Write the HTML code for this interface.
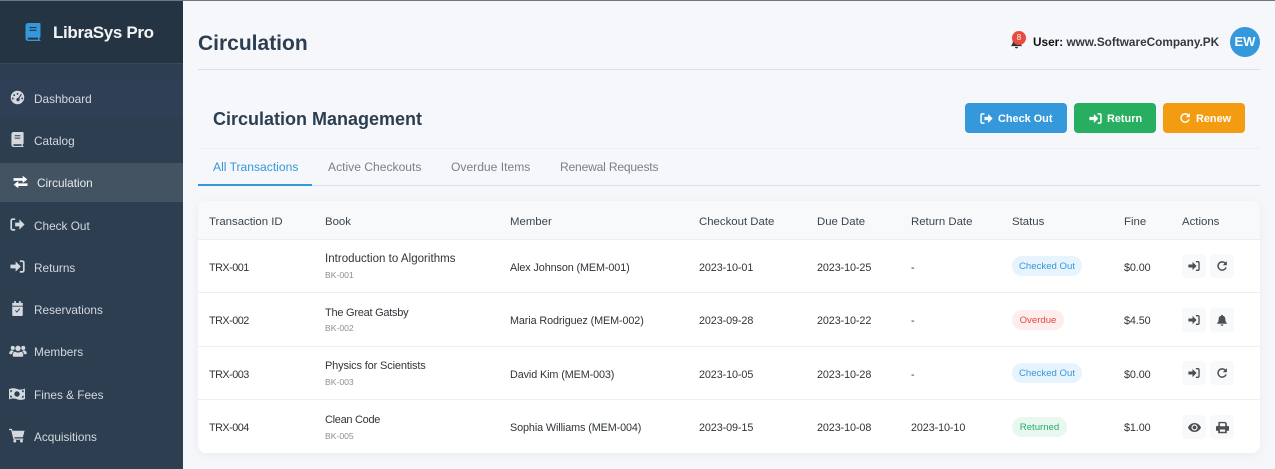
<!DOCTYPE html>
<html><head><meta charset="utf-8"><style>
html,body{margin:0;padding:0}
body{width:1275px;height:469px;overflow:hidden;position:relative;background:#f5f7fb;font-family:"Liberation Sans",sans-serif;color:#2c3e50}
.a,.t{position:absolute}
.t{white-space:nowrap;line-height:16px;font-size:10.8px;letter-spacing:-.1px;color:#2f353a}
.n{color:#d4d9de;font-size:11.8px;letter-spacing:0}
.h{font-size:11.4px;letter-spacing:0;color:#3a4650}
.s{font-size:8.6px;letter-spacing:0;color:#8a8f94}
.g{font-size:12.1px;letter-spacing:0;color:#7b8087}
.b{color:#fff;font-weight:bold;font-size:10.9px;letter-spacing:0}
.id{letter-spacing:-.5px}
.p{position:absolute;left:1012px;height:20px;border-radius:10px;font-size:9.6px;line-height:21px;text-align:center}
.ab{position:absolute;width:24px;height:24px;background:#f8f9fa;border-radius:4px}
svg{position:absolute;overflow:visible}
.btn{position:absolute;top:103px;height:30px;border-radius:4px}
.ln{position:absolute;left:198px;height:1px;width:1062px}
</style></head><body>
<svg width="0" height="0" style="position:absolute"><defs>
<symbol id="si" viewBox="0 0 16 16"><path d="M.5 6h5.500V2.500L11.500 8 6 13.500V10H.5z" fill="currentColor"/><path d="M10.500 2.300h2.700a1.600 1.600 0 0 1 1.500 1.500v8.400a1.600 1.600 0 0 1-1.500 1.500h-2.700" fill="none" stroke="currentColor" stroke-width="1.800"/></symbol>
<symbol id="so" viewBox="0 0 16 16"><path d="M10 6V2.500L15.500 8 10 13.500V10H5.500V6z" fill="currentColor"/><path d="M5.500 2.300H2.800A1.600 1.600 0 0 0 1.300 3.800v8.400a1.600 1.600 0 0 0 1.500 1.500h2.700" fill="none" stroke="currentColor" stroke-width="1.800"/></symbol>
<symbol id="re" viewBox="0 0 16 16"><path d="M12.300 4.300A5.500 5.500 0 1 0 13.400 9.800" fill="none" stroke="currentColor" stroke-width="1.900"/><path d="M14.500 1.500v5.500H9z" fill="currentColor"/></symbol>
<symbol id="be" viewBox="0 0 16 16"><path d="M8 1a1.200 1.200 0 0 1 1.200 1.300C11.500 2.900 12.500 4.800 12.500 7c0 3 1 4.200 2 5.200v.8h-13v-.8c1-1 2-2.200 2-5.200 0-2.200 1-4.100 3.300-4.700A1.200 1.200 0 0 1 8 1zM6.200 14h3.600A1.800 1.800 0 0 1 6.200 14z" fill="currentColor"/></symbol>
<symbol id="ey" viewBox="0 0 16 16"><path fill-rule="evenodd" d="M8 2.500C4.300 2.500 1.300 5 0 8c1.300 3 4.300 5.500 8 5.500s6.700-2.500 8-5.500c-1.300-3-4.300-5.500-8-5.500zm0 1.700a3.800 3.800 0 1 1 0 7.600 3.800 3.800 0 0 1 0-7.600z" fill="currentColor"/><circle cx="8" cy="8" r="2.300" fill="currentColor"/></symbol>
<symbol id="pr" viewBox="0 0 16 16"><path fill-rule="evenodd" d="M3 1h8.500l1.800 1.800V6h1A1.500 1.500 0 0 1 16 7.500V12h-2.700v3H2.700v-3H0V7.500A1.500 1.500 0 0 1 1.500 6H3zM4.800 2.800v3.700h6.600V3.500l-.7-.7zM4.800 10.500v2.800h6.400v-2.800z" fill="currentColor"/></symbol>
<symbol id="bk" viewBox="0 0 16 16" preserveAspectRatio="none"><path fill-rule="evenodd" d="M3 0H14.500a1 1 0 0 1 1 1v11.500l-1 .7v1.600l1 .5v.7H3A2.500 2.500 0 0 1 .5 13.500v-11A2.500 2.500 0 0 1 3 0zM4.500 3.500v1h7v-1zM4.500 6v1h7V6zM3.300 13a1 1 0 0 0 0 1.800h9.700V13z" fill="currentColor"/></symbol>
<symbol id="da" viewBox="0 0 16 16"><path fill-rule="evenodd" d="M8 .8a7.200 7.200 0 1 1 0 14.400A7.200 7.200 0 0 1 8 .8zM8 3a1 1 0 1 0 0 2 1 1 0 0 0 0-2zM4.500 4.500a1 1 0 1 0 0 2 1 1 0 0 0 0-2zM3 8a1 1 0 1 0 0 2 1 1 0 0 0 0-2zM13 8a1 1 0 1 0 0 2 1 1 0 0 0 0-2zM11.700 4l-3 4.500a1.800 1.800 0 1 0 1.200.6l2.800-4.600z" fill="currentColor"/></symbol>
<symbol id="ex" viewBox="0 0 16 16"><path d="M0 3.500h10.500V.8L15.800 5l-5.300 4.200V6.500H0zM16 9.500H5.500V6.800L.2 11l5.300 4.200v-2.700H16z" fill="currentColor"/></symbol>
<symbol id="ca" viewBox="0 0 16 16" preserveAspectRatio="none"><path fill-rule="evenodd" d="M4 0h2v2h4V0h2v2h2.500v3h-13V2H4zM1.500 6h13v8.500a1.500 1.500 0 0 1-1.500 1.500H3a1.500 1.500 0 0 1-1.500-1.500zM5 10.300l2.200 2.200 3.900-3.900-.7-.7-3.200 3.200-1.500-1.500z" fill="currentColor"/></symbol>
<symbol id="us" viewBox="0 0 20 16"><circle cx="4" cy="4.500" r="2.300" fill="currentColor"/><circle cx="16" cy="4.500" r="2.300" fill="currentColor"/><circle cx="10" cy="5" r="3.100" fill="currentColor"/><path d="M0 11c0-2.500 1.500-3.700 3-3.700 1 0 1.600.3 2.200.8C4 9 3.400 10 3.200 11.500H1a1 1 0 0 1-1-.5zM20 11c0-2.500-1.500-3.700-3-3.700-1 0-1.600.3-2.200.8 1.200.9 1.800 1.900 2 3.400H19a1 1 0 0 0 1-.5zM6.500 8.700c1 .7 2.200 1 3.500 1s2.500-.3 3.500-1c1.500.3 2.500 1.700 2.500 3.500v1.300a1.200 1.200 0 0 1-1.200 1H5.200a1.200 1.200 0 0 1-1.200-1v-1.300c0-1.800 1-3.200 2.500-3.500z" fill="currentColor"/></symbol>
<symbol id="mo" viewBox="0 0 16 12" preserveAspectRatio="none"><path fill-rule="evenodd" d="M0 1.200C3-.2 6 .3 8 1c2.500.8 5 1 8-.5V11c-3 1.200-5.500.9-8 .2-2.500-.8-5-1-8 .2zM8 3.300a2.700 2.700 0 1 0 0 5.400 2.700 2.700 0 0 0 0-5.400zM1.300 2.300v1.900a1.900 1.900 0 0 0 1.900-2zM14.700 9.500V7.600a1.900 1.900 0 0 0-1.900 2.100zM1.300 7.500v2.200l1.900-.4a1.900 1.900 0 0 0-1.900-1.800zM14.700 2.200l-1.900.4a1.900 1.900 0 0 0 1.900 1.700z" fill="currentColor"/></symbol>
<symbol id="ct" viewBox="0 0 18 16"><path d="M0 .6h3.300l.6 2h13.600l-1.900 7.400H6l.3 1.400h9.700v1.400H5.100L2.400 2H0z" fill="currentColor"/><circle cx="6.500" cy="14.300" r="1.600" fill="currentColor"/><circle cx="14" cy="14.300" r="1.600" fill="currentColor"/></symbol>
</defs></svg>

<!-- sidebar -->
<div class="a" style="left:0;top:0;width:183px;height:469px;background:#2c3e50"></div>
<div class="a" style="left:0;top:0;width:183px;height:64px;background:#253443;border-bottom:1px solid #3a4959;box-sizing:border-box"></div>
<div class="a" style="left:0;top:79px;width:183px;height:38px;background:#2f4056"></div>
<div class="a" style="left:0;top:163px;width:183px;height:39px;background:#435362"></div>
<div class="a" style="left:0;top:0;width:1275px;height:1px;background:#6d7885"></div>

<svg style="left:25px;top:23px;color:#3498db" width="16" height="18"><use href="#bk" width="16" height="18"/></svg>
<div class="t" style="left:53px;top:22px;font-size:17px;line-height:21px;letter-spacing:-.35px;font-weight:bold;color:#f2f4f6">LibraSys Pro</div>

<svg style="left:10px;top:90px;color:#d4d9de" width="15" height="15"><use href="#da" width="15" height="15"/></svg>
<div class="t n" style="left:34px;top:91px">Dashboard</div>
<svg style="left:11px;top:132px;color:#d4d9de" width="13" height="15"><use href="#bk" width="13" height="15"/></svg>
<div class="t n" style="left:34px;top:133px">Catalog</div>
<svg style="left:13px;top:175px;color:#fff" width="15" height="14"><use href="#ex" width="15" height="14"/></svg>
<div class="t n" style="left:37px;top:175px;color:#e8ebee">Circulation</div>
<svg style="left:10px;top:217px;color:#d4d9de" width="15" height="15"><use href="#so" width="15" height="15"/></svg>
<div class="t n" style="left:34px;top:218px">Check Out</div>
<svg style="left:10px;top:259px;color:#d4d9de" width="15" height="15"><use href="#si" width="15" height="15"/></svg>
<div class="t n" style="left:34px;top:260px">Returns</div>
<svg style="left:11px;top:301px;color:#d4d9de" width="13" height="15"><use href="#ca" width="13" height="15"/></svg>
<div class="t n" style="left:34px;top:302px">Reservations</div>
<svg style="left:9px;top:344px;color:#d4d9de" width="18" height="14"><use href="#us" width="18" height="14"/></svg>
<div class="t n" style="left:34px;top:344px">Members</div>
<svg style="left:9px;top:388px;color:#d4d9de" width="16" height="12"><use href="#mo" width="16" height="12"/></svg>
<div class="t n" style="left:34px;top:387px">Fines &amp; Fees</div>
<svg style="left:9px;top:428px;color:#d4d9de" width="16" height="15"><use href="#ct" width="16" height="15"/></svg>
<div class="t n" style="left:34px;top:429px">Acquisitions</div>

<!-- header -->
<div class="t" style="left:198px;top:31px;font-size:21px;letter-spacing:0;line-height:26px;font-weight:bold;color:#2c3e50">Circulation</div>
<svg style="left:1010px;top:35px;color:#2c3338" width="13" height="14"><use href="#be" width="13" height="14"/></svg>
<div class="a" style="left:1012px;top:31px;width:14px;height:14px;border-radius:50%;background:#e74c3c;color:#fff;font-size:8px;line-height:14px;text-align:center">8</div>
<div class="t" style="left:1033px;top:34px;font-size:11.8px;letter-spacing:0;font-weight:bold;color:#33393f"><span style="color:#111">User:</span> www.SoftwareCompany.PK</div>
<div class="a" style="left:1230px;top:27px;width:30px;height:30px;border-radius:50%;background:#3498db;color:#fff;font-weight:bold;font-size:13px;line-height:30px;text-align:center">EW</div>
<div class="ln" style="top:69px;background:#dde1e6"></div>

<!-- section head -->
<div class="t" style="left:213px;top:108px;font-size:18px;letter-spacing:0;line-height:23px;font-weight:bold;color:#2c3e50">Circulation Management</div>
<div class="btn" style="left:965px;width:102px;background:#3498db"></div>
<svg style="left:980px;top:112px;color:#fff" width="13" height="13"><use href="#so" width="13" height="13"/></svg>
<div class="t b" style="left:998px;top:111px">Check Out</div>
<div class="btn" style="left:1074px;width:82px;background:#27ae60"></div>
<svg style="left:1089px;top:112px;color:#fff" width="13" height="13"><use href="#si" width="13" height="13"/></svg>
<div class="t b" style="left:1107px;top:111px">Return</div>
<div class="btn" style="left:1163px;width:82px;background:#f39c12"></div>
<svg style="left:1179px;top:112px;color:#fff" width="12" height="12"><use href="#re" width="12" height="12"/></svg>
<div class="t b" style="left:1196px;top:111px">Renew</div>
<div class="ln" style="top:148px;background:#eceef2"></div>

<!-- tabs -->
<div class="t g" style="left:213px;top:159px;color:#3498db">All Transactions</div>
<div class="t g" style="left:328px;top:159px">Active Checkouts</div>
<div class="t g" style="left:451px;top:159px">Overdue Items</div>
<div class="t g" style="left:560px;top:159px;letter-spacing:-.2px">Renewal Requests</div>
<div class="ln" style="top:185px;background:#dde1e6"></div>
<div class="a" style="left:198px;top:184px;width:114px;height:2px;background:#3498db"></div>

<!-- table -->
<div class="a" style="left:198px;top:201px;width:1062px;height:252px;background:#fff;border-radius:8px;box-shadow:0 2px 10px rgba(0,0,0,.05);overflow:hidden">
<div class="a" style="left:0;top:0;width:1062px;height:38px;background:#f8f9fa;border-bottom:1px solid #edeff1"></div>
<div class="a" style="left:0;top:91px;width:1062px;height:1px;background:#edeff1"></div>
<div class="a" style="left:0;top:145px;width:1062px;height:1px;background:#edeff1"></div>
<div class="a" style="left:0;top:198px;width:1062px;height:1px;background:#edeff1"></div>
</div>

<div class="t h" style="left:209px;top:214px">Transaction ID</div>
<div class="t h" style="left:325px;top:214px">Book</div>
<div class="t h" style="left:510px;top:214px">Member</div>
<div class="t h" style="left:699px;top:214px">Checkout Date</div>
<div class="t h" style="left:817px;top:214px">Due Date</div>
<div class="t h" style="left:911px;top:214px">Return Date</div>
<div class="t h" style="left:1012px;top:214px">Status</div>
<div class="t h" style="left:1124px;top:214px">Fine</div>
<div class="t h" style="left:1182px;top:214px">Actions</div>

<!-- row 1 -->
<div class="t id" style="left:209px;top:260px">TRX-001</div>
<div class="t" style="left:325px;top:251px;font-size:11.5px;letter-spacing:.03px">Introduction to Algorithms</div>
<div class="t s" style="left:325px;top:267px">BK-001</div>
<div class="t" style="left:510px;top:260px">Alex Johnson (MEM-001)</div>
<div class="t" style="left:699px;top:260px">2023-10-01</div>
<div class="t" style="left:817px;top:260px">2023-10-25</div>
<div class="t" style="left:911px;top:260px">-</div>
<div class="p" style="top:256px;width:70px;background:#e8f4fd;color:#3498db">Checked Out</div>
<div class="t" style="left:1124px;top:260px">$0.00</div>
<div class="ab" style="left:1182px;top:254px"></div><div class="ab" style="left:1210px;top:254px"></div>
<svg style="left:1188px;top:260px;color:#4a4f54" width="12" height="12"><use href="#si" width="12" height="12"/></svg>
<svg style="left:1216px;top:260px;color:#4a4f54" width="12" height="12"><use href="#re" width="12" height="12"/></svg>

<!-- row 2 -->
<div class="t id" style="left:209px;top:313px">TRX-002</div>
<div class="t" style="left:325px;top:305px;font-size:11px;letter-spacing:-.25px">The Great Gatsby</div>
<div class="t s" style="left:325px;top:320px">BK-002</div>
<div class="t" style="left:510px;top:313px">Maria Rodriguez (MEM-002)</div>
<div class="t" style="left:699px;top:313px">2023-09-28</div>
<div class="t" style="left:817px;top:313px">2023-10-22</div>
<div class="t" style="left:911px;top:313px">-</div>
<div class="p" style="top:310px;width:52px;background:#fdeded;color:#e74c3c">Overdue</div>
<div class="t" style="left:1124px;top:313px">$4.50</div>
<div class="ab" style="left:1182px;top:308px"></div><div class="ab" style="left:1210px;top:308px"></div>
<svg style="left:1188px;top:314px;color:#4a4f54" width="12" height="12"><use href="#si" width="12" height="12"/></svg>
<svg style="left:1216px;top:314px;color:#4a4f54" width="12" height="12"><use href="#be" width="12" height="12"/></svg>

<!-- row 3 -->
<div class="t id" style="left:209px;top:367px">TRX-003</div>
<div class="t" style="left:325px;top:358px;font-size:11px;letter-spacing:-.15px">Physics for Scientists</div>
<div class="t s" style="left:325px;top:374px">BK-003</div>
<div class="t" style="left:510px;top:367px">David Kim (MEM-003)</div>
<div class="t" style="left:699px;top:367px">2023-10-05</div>
<div class="t" style="left:817px;top:367px">2023-10-28</div>
<div class="t" style="left:911px;top:367px">-</div>
<div class="p" style="top:363px;width:70px;background:#e8f4fd;color:#3498db">Checked Out</div>
<div class="t" style="left:1124px;top:367px">$0.00</div>
<div class="ab" style="left:1182px;top:361px"></div><div class="ab" style="left:1210px;top:361px"></div>
<svg style="left:1188px;top:367px;color:#4a4f54" width="12" height="12"><use href="#si" width="12" height="12"/></svg>
<svg style="left:1216px;top:367px;color:#4a4f54" width="12" height="12"><use href="#re" width="12" height="12"/></svg>

<!-- row 4 -->
<div class="t id" style="left:209px;top:420px">TRX-004</div>
<div class="t" style="left:325px;top:412px;font-size:11px;letter-spacing:-.3px">Clean Code</div>
<div class="t s" style="left:325px;top:428px">BK-005</div>
<div class="t" style="left:510px;top:420px">Sophia Williams (MEM-004)</div>
<div class="t" style="left:699px;top:420px">2023-09-15</div>
<div class="t" style="left:817px;top:420px">2023-10-08</div>
<div class="t" style="left:911px;top:420px">2023-10-10</div>
<div class="p" style="top:417px;width:55px;background:#e8f8f0;color:#27ae60">Returned</div>
<div class="t" style="left:1124px;top:420px">$1.00</div>
<div class="ab" style="left:1182px;top:415px"></div><div class="ab" style="left:1210px;top:415px"></div>
<svg style="left:1188px;top:421px;color:#4a4f54" width="13" height="13"><use href="#ey" width="13" height="13"/></svg>
<svg style="left:1216px;top:421px;color:#4a4f54" width="13" height="13"><use href="#pr" width="13" height="13"/></svg>
</body></html>
